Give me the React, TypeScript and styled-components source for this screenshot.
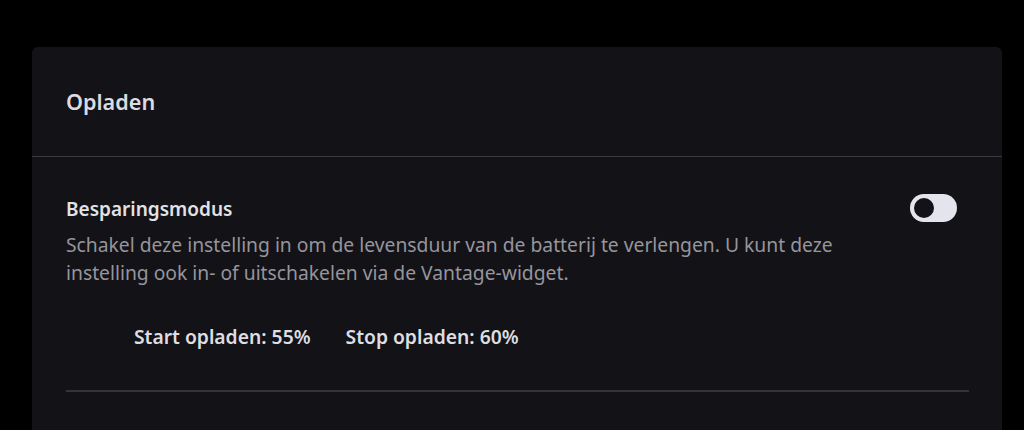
import React, {useState} from "react";
import styled, {createGlobalStyle} from "styled-components";

const GlobalStyle = createGlobalStyle`
    html, body {
        margin: 0;
        padding: 0;
        background: #000;
    }
    body {
        font-family: "Noto Sans", "Open Sans", Arial, sans-serif;
        -webkit-font-smoothing: antialiased;
    }
`;

const Page = styled.div`
    width: 1024px;
    height: 430px;
    overflow: hidden;
    background: #000;
    padding: 47px 22px 0 32px;
    box-sizing: border-box;
`;

const Card = styled.section`
    background: #131217;
    border-radius: 6px;
    height: 420px;
    .card-head {
        height: 110px;
        padding: 0 34px;
        display: flex;
        align-items: center;
        border-bottom: 1px solid #3a3940;
        box-sizing: border-box;
    }
    .card-title {
        font-size: 21.6px;
        font-weight: 600;
        color: #dcdce0;
        margin: 0;
    }
`;

const SettingRow = styled.div`
    margin: 0 33px 0 34px;
    padding: 40px 0 0;
    border-bottom: 2px solid #34333a;
    height: 235px;
    box-sizing: border-box;
    .row-top {
        display: flex;
        justify-content: space-between;
        align-items: flex-start;
    }
    .row-title {
        font-size: 19px;
        font-weight: 600;
        color: #e2e2e6;
        line-height: 24px;
        margin: 0;
    }
    .row-desc {
        font-size: 19.3px;
        color: #96959c;
        line-height: 28px;
        margin: 10px 0 0;
        max-width: 800px;
    }
    .levels {
        display: flex;
        gap: 35px;
        padding: 37px 0 0 68px;
        font-size: 19.3px;
        font-weight: 600;
        color: #dedee2;
        line-height: 26px;
    }
`;

const Toggle = styled.button<{on: boolean}>`
    width: 47px;
    height: 28px;
    border-radius: 14px;
    border: none;
    padding: 0;
    margin: -3px 12px 0 0;
    background: #e4e4ec;
    position: relative;
    cursor: pointer;
    flex-shrink: 0;
    &::after {
        content: "";
        position: absolute;
        top: 4px;
        left: ${props => props.on ? "23px" : "4px"};
        width: 20px;
        height: 20px;
        border-radius: 50%;
        background: #131217;
    }
`;

const App: React.FC = () => {
    const [on, setOn] = useState(false);
    return <>
        <GlobalStyle />
        <Page>
            <Card>
                <div className="card-head">
                    <h2 className="card-title">Opladen</h2>
                </div>
                <SettingRow>
                    <div className="row-top">
                        <div>
                            <p className="row-title">Besparingsmodus</p>
                            <p className="row-desc">
                                Schakel deze instelling in om de levensduur van de batterij te verlengen. U kunt deze instelling ook in- of uitschakelen via de Vantage-widget.
                            </p>
                        </div>
                        <Toggle on={on} onClick={() => setOn(!on)} aria-label="Besparingsmodus" />
                    </div>
                    <div className="levels">
                        <span>Start opladen: 55%</span>
                        <span>Stop opladen: 60%</span>
                    </div>
                </SettingRow>
            </Card>
        </Page>
    </>
}
export default App;
